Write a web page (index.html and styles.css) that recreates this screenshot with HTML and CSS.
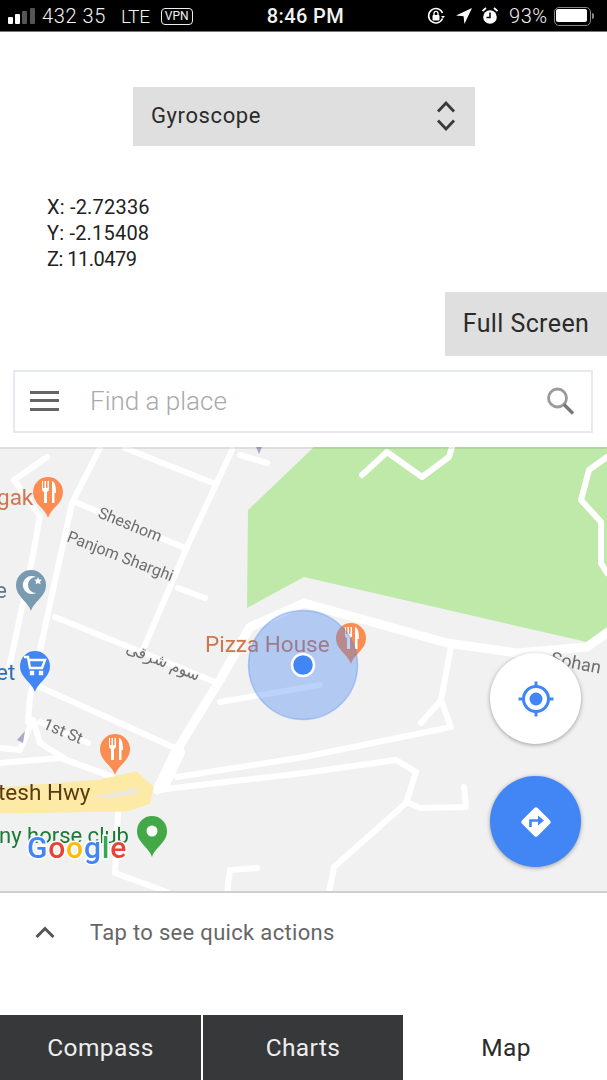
FILE: index.html
```html
<!DOCTYPE html>
<html>
  <head>
    <title>Sensors</title>
    <link rel="stylesheet" href="styles.css">
  </head>
  <body>
    <div class="status">
      <svg class="signal" width="28" height="16" viewBox="0 0 28 16">
        <rect x="0" y="9" width="5" height="7" rx="1" fill="#fff"/>
        <rect x="7" y="6" width="5" height="10" rx="1" fill="#fff"/>
        <rect x="14" y="3" width="5" height="13" rx="1" fill="#555"/>
        <rect x="22" y="0" width="5" height="16" rx="1" fill="#555"/>
      </svg>
      <span class="carrier">432 35</span>
      <span class="lte">LTE</span>
      <span class="vpn">VPN</span>
      <span class="time">8:46 PM</span>
      <svg class="lock" width="18" height="18" viewBox="0 0 18 18">
        <path d="M15.5 11.5A7.2 7.2 0 1 1 15.5 6" fill="none" stroke="#fff" stroke-width="1.6"/>
        <path d="M14 9h4l-2 2.6z" fill="#fff"/>
        <rect x="5.5" y="8" width="7" height="5.5" rx="1" fill="#fff"/>
        <path d="M7 8V6.4a2 2 0 0 1 4 0V8" fill="none" stroke="#fff" stroke-width="1.3"/>
      </svg>
      <svg class="arrow" width="16" height="16" viewBox="0 0 16 16"><path d="M16 0L0 7.5l7.6.8.8 7.7z" fill="#fff"/></svg>
      <svg class="alarm" width="16" height="18" viewBox="0 0 16 18">
        <circle cx="8" cy="10" r="6.8" fill="#fff"/>
        <path d="M8 5.5V10.5H4.5" fill="none" stroke="#000" stroke-width="1.5"/>
        <path d="M0.5 4L4 1M15.5 4L12 1" stroke="#fff" stroke-width="1.8"/>
      </svg>
      <span class="percent">93%</span>
      <div class="battery"><div class="charge"></div></div>
      <div class="nub"></div>
    </div>

    <div class="picker">
      <div class="select">
        <span>Gyroscope</span>
        <svg width="20" height="30" viewBox="0 0 20 30">
          <path d="M2 10.500L10 2l8 8.500M2 19.500l8 8.500 8-8.500" fill="none" stroke="#3a3a3a" stroke-width="2.800"/>
        </svg>
      </div>
    </div>

    <div class="readout">
      <div class="wide-row">X: -2.72336</div>
      <div class="wide-row">Y: -2.15408</div>
      <div class="tight-row">Z: 11.0479</div>
    </div>

    <div class="actions"><button class="full">Full Screen</button></div>

    <div class="search">
      <div class="burger"><i></i><i></i><i></i></div>
      <span class="place">Find a place</span>
      <svg width="30" height="28" viewBox="0 0 30 28">
        <circle cx="11.500" cy="11" r="9" fill="none" stroke="#9a9a9a" stroke-width="2.800"/>
        <path d="M18 17.500l9 9" stroke="#777" stroke-width="3.400"/>
      </svg>
    </div>

    <div class="map">
      <svg class="canvas" width="607" height="446" viewBox="0 447 607 446">
        <rect x="0" y="447" width="607" height="446" fill="#f1f1f1"/>
        <path class="park" d="M248 510L314 447H607V627L587 642L304 577L247 608Z"/>

        <g class="roads">
          <path d="M100 448L72 503L45 627L30 697L28 722"/>
          <path d="M47 457L14 480L40 516L32 560L8 673"/>
          <path d="M125 448L213 483"/>
          <path d="M232 450L187 547L143 650"/>
          <path d="M240 455L267 463"/>
          <path d="M75 502L185 548"/>
          <path d="M178 588L205 598"/>
          <path d="M55 617L215 682"/>
          <path d="M40 687L175 748"/>
          <path d="M40 722L88 743"/>
          <path d="M33 720L40 743L67 760L113 777"/>
          <path d="M0 763L60 758L113 777"/>
          <path d="M0 748L20 750L33 720"/>
          <path class="main" d="M304 603L250 627L220 680L177 750L157 790"/>
          <path class="main" d="M304 603L447 643L517 653L587 647L607 633"/>
          <path class="wide" d="M178 752L162 786"/>
          <path d="M362 475L387 452L422 477L449 457L452 447"/>
          <path d="M607 457L589 470L581 500L601 522L601 563L607 573"/>
          <path d="M451 647L441 700L451 727L304 757L177 777"/>
          <path d="M441 700L421 723"/>
          <path d="M157 790L304 773L396 760L416 772L406 803L334 867L329 893"/>
          <path d="M406 802L421 808L466 807L464 787"/>
          <path d="M220 702L320 685"/>
          <path d="M118 813L115 873L167 892"/>
          <path d="M227 893L230 870L257 868"/>
        </g>

        <path class="highway" d="M0 790L100 782L136 774L151 788L148 802L127 809L0 811Z"/>
        <path class="loop" d="M90 797L138 788L137 794L113 798Z"/>

        <path class="shade" d="M256 447l3 7 3-7z"/>
        <path class="shade" d="M25 731l-2 12-6-3z"/>

        <text class="label" transform="translate(97 517) rotate(22)">Sheshom</text>
        <text class="label" transform="translate(66 541) rotate(21)">Panjom Sharghi</text>
        <text class="label arabic" transform="translate(125 652) rotate(22)">سوم شرقی</text>
        <text class="label" transform="translate(42 728) rotate(23)">1st St</text>
        <text class="label sohan" transform="translate(550 664) rotate(11)">Sohan</text>

        <text class="poi food" x="-3" y="505">gak</text>
        <text class="poi mosque" x="-5" y="598">e</text>
        <text class="poi shop" x="-4" y="680">et</text>
        <text class="poi road" x="-2" y="800">tesh Hwy</text>
        <text class="poi club" x="-1" y="843">ny horse club</text>
        <text class="poi food" x="205" y="652">Pizza House</text>

        <!-- orange pins -->
        <g fill="#fb8d53">
          <path d="M48 518C45 508 33 504 33 492a15 15 0 0 1 30 0C63 504 51 508 48 518Z"/>
          <path d="M115 775C112 765 100 761 100 749a15 15 0 0 1 30 0C130 761 118 765 115 775Z"/>
          <path d="M351 664C348 654 336 650 336 638a15 15 0 0 1 30 0C366 650 354 654 351 664Z"/>
        </g>
        <path d="M31 611C28 601 16 597 16 585a15 15 0 0 1 30 0C46 597 34 601 31 611Z" fill="#789bb2"/>
        <path d="M35 692C32 682 20 678 20 666a15 15 0 0 1 30 0C50 678 38 682 35 692Z" fill="#4285f4"/>
        <path d="M152 857C149 847 137 843 137 831a15 15 0 0 1 30 0C167 843 155 847 152 857Z" fill="#43a847"/>
        <circle cx="152" cy="831" r="5.500" fill="#fff"/>

        <g class="fork">
          <path d="M42 481v8a3 3 0 0 0 2 3v11h3v-11a3 3 0 0 0 2-3v-8h-1.500v7h-1.500v-7h-1.500v7h-1.500v-7z"/>
          <path d="M52 481c3 1 4 5 4 12h-1.500v10h-2.500z"/>
          <path d="M109 738v8a3 3 0 0 0 2 3v11h3v-11a3 3 0 0 0 2-3v-8h-1.500v7h-1.500v-7h-1.500v7h-1.500v-7z"/>
          <path d="M119 738c3 1 4 5 4 12h-1.500v10h-2.500z"/>
          <path d="M345 627v8a3 3 0 0 0 2 3v11h3v-11a3 3 0 0 0 2-3v-8h-1.500v7h-1.500v-7h-1.500v7h-1.500v-7z"/>
          <path d="M355 627c3 1 4 5 4 12h-1.500v10h-2.500z"/>
        </g>
        <path d="M36 577a9 9 0 1 0 0 16a7.500 7.500 0 1 1 0-16z" fill="#fff"/>
        <path d="M38 577l1.200 2.500 2.800.3-2 1.800.6 2.700-2.600-1.400-2.400 1.400.6-2.700-2-1.800 2.700-.3z" fill="#fff"/>
        <path d="M24 657h4l2 11h12l3-8H29M31 672h2v2h-2zM40 672h2v2h-2z" fill="none" stroke="#fff" stroke-width="2.400"/>

        <circle class="accuracy" cx="303" cy="665" r="54.500"/>
        <circle class="dot" cx="303" cy="665" r="11"/>

        <text class="google" x="27" y="858"><tspan fill="#4285f4">G</tspan><tspan fill="#ea4335">o</tspan><tspan fill="#fbbc05">o</tspan><tspan fill="#4285f4">g</tspan><tspan fill="#34a853">l</tspan><tspan fill="#ea4335">e</tspan></text>

        <rect x="0" y="447" width="607" height="2" fill="#000" opacity="0.08"/>
      </svg>

      <div class="fab locate">
        <svg width="36" height="36" viewBox="0 0 36 36">
          <circle cx="18" cy="18" r="12.500" fill="none" stroke="#4285f4" stroke-width="3"/>
          <circle cx="18" cy="18" r="6.500" fill="#4285f4"/>
          <path d="M18 0.500v6M18 29.500v6M0.500 18h6M29.500 18h6" stroke="#4285f4" stroke-width="3"/>
        </svg>
      </div>
      <div class="fab route">
        <svg width="34" height="34" viewBox="0 0 34 34">
          <rect x="6" y="6" width="22" height="22" rx="2" transform="rotate(45 17 17)" fill="#fff"/>
          <path d="M11.500 22v-6.500h9" fill="none" stroke="#4285f4" stroke-width="2.600"/>
          <path d="M19 10.500l6 5-6 5z" fill="#4285f4"/>
        </svg>
      </div>
    </div>

    <div class="quick">
      <svg width="20" height="12" viewBox="0 0 20 12"><path d="M1.500 11L10 2.500l8.500 8.500" fill="none" stroke="#555" stroke-width="3"/></svg>
      <span>Tap to see quick actions</span>
    </div>

    <div class="tabs">
      <div class="tab">Compass</div>
      <div class="tab second">Charts</div>
      <div class="tab on">Map</div>
    </div>
  </body>
</html>
```

FILE: styles.css
```css
html, body { margin: 0; padding: 0; }
body { width: 607px; height: 1080px; overflow: hidden; background: #fff; font-family: Roboto, "Liberation Sans", sans-serif; color: #2b2b2b; }

.status { height: 32px; padding-top: 1px; background: #000; color: #f2f2f2; display: flex; align-items: center; font-family: Roboto, sans-serif; font-size: 20px; box-sizing: border-box; border-bottom: 1px solid #777; }
.signal { margin-left: 8px; }
.carrier { margin-left: 6px; font-weight: 300; letter-spacing: 0.6px; }
.lte { margin-left: 15px; font-size: 19px; font-weight: 300; letter-spacing: -0.3px; }
.vpn { margin-left: 11px; width: 32px; height: 17px; box-sizing: border-box; border: 1.5px solid #eee; border-radius: 4px; font-size: 12px; line-height: 14px; text-align: center; }
.time { margin-left: 74px; font-weight: 500; font-size: 20px; letter-spacing: 0.4px; }
.lock { margin-left: 83px; }
.arrow { margin-left: 11px; }
.alarm { margin-left: 10px; }
.percent { margin-left: 11px; font-weight: 300; letter-spacing: 0.5px; }
.battery { margin-left: 6px; width: 37px; height: 19px; box-sizing: border-box; border: 1.5px solid #888; border-radius: 5px; padding: 1.5px; }
.charge { width: 31px; height: 13px; background: #fff; border-radius: 2px; }
.nub { width: 2px; height: 6px; background: #888; margin-left: 1px; border-radius: 0 2px 2px 0; }

.picker { padding-top: 55px; padding-left: 133px; }
.select { width: 342px; height: 59px; box-sizing: border-box; background: #dfdfdf; padding: 0 19px 2px 18px; display: flex; align-items: center; justify-content: space-between; font-size: 22px; letter-spacing: 0.6px; }

.readout { margin-top: 48px; padding-left: 47px; font-size: 20px; line-height: 26px; color: #222; }
.wide-row { letter-spacing: 0.2px; }
.tight-row { letter-spacing: -0.5px; }

.actions { display: flex; justify-content: flex-end; margin-top: 20px; }
.full { width: 162px; height: 64px; border: none; background: #dfdfdf; padding: 0 0 2px; font-family: inherit; font-size: 25px; letter-spacing: 0.4px; color: #2b2b2b; }

.search { margin: 14px 14px 0 13px; height: 63px; box-sizing: border-box; border: 2px solid #e6e9ee; display: flex; align-items: center; padding: 0 15px 2px 15px; }
.burger { width: 29px; display: flex; flex-direction: column; gap: 5.500px; }
.burger i { display: block; height: 3px; background: #666; }
.place { flex: 1; margin-left: 31px; font-size: 26px; font-weight: 300; color: #a9a9a9; }

.map { position: relative; height: 446px; margin-top: 14px; border-bottom: 2px solid #cfcfcf; box-sizing: border-box; overflow: hidden; }
.canvas { display: block; filter: blur(0.5px); }
.park { fill: #bfe9a9; }
.roads path { fill: none; stroke: #fff; stroke-width: 6; stroke-linecap: round; stroke-linejoin: round; }
.roads .main { stroke-width: 9; }
.roads .wide { stroke-width: 14; }
.highway { fill: #fdeaa6; stroke: #fdeaa6; stroke-width: 5; stroke-linejoin: round; }
.loop { fill: #ece8dc; }
.shade { fill: #a9a9c8; }
.label { font-size: 16px; fill: #6e6e6e; stroke: #f1f1f1; stroke-width: 2px; paint-order: stroke; }
.arabic { font-size: 16px; }
.sohan { font-size: 18px; stroke: none; }
.poi { font-size: 22.500px; stroke: #f1f1f1; stroke-width: 2px; paint-order: stroke; }
.food { fill: #d0764f; }
.mosque { fill: #5a7888; }
.shop { fill: #2f6fb5; }
.road { fill: #5b3a10; stroke: none; }
.club { fill: #1d7a36; font-size: 22px; }
.fork path { fill: #fff; }
.accuracy { fill: rgba(66,133,244,0.36); stroke: rgba(66,133,244,0.35); stroke-width: 1.500; }
.dot { fill: #4285f4; stroke: #fff; stroke-width: 2.500; }
.google { font-family: Roboto, sans-serif; font-weight: 500; font-size: 30px; letter-spacing: 0.8px; stroke: #fff; stroke-width: 3px; paint-order: stroke; }

.fab { position: absolute; left: 490px; width: 91px; height: 91px; border-radius: 50%; display: flex; align-items: center; justify-content: center; box-shadow: 0 1px 4px rgba(0,0,0,0.35); }
.locate { top: 206px; background: #fff; }
.route { top: 329px; background: #4285f4; }

.quick { height: 122px; box-sizing: border-box; display: flex; align-items: center; padding: 0 0 44px 35px; font-size: 22px; color: #666; gap: 35px; letter-spacing: 0.32px; }

.tabs { display: flex; height: 65px; }
.tab { width: 201px; margin-right: 2px; background: #37383a; color: #eee; display: flex; align-items: center; justify-content: center; font-size: 24.500px; letter-spacing: 0.4px; }
.tab.second { width: 200px; }
.tab.on { flex: 1; margin-right: 0; background: #fff; color: #2b2b2b; }
```
